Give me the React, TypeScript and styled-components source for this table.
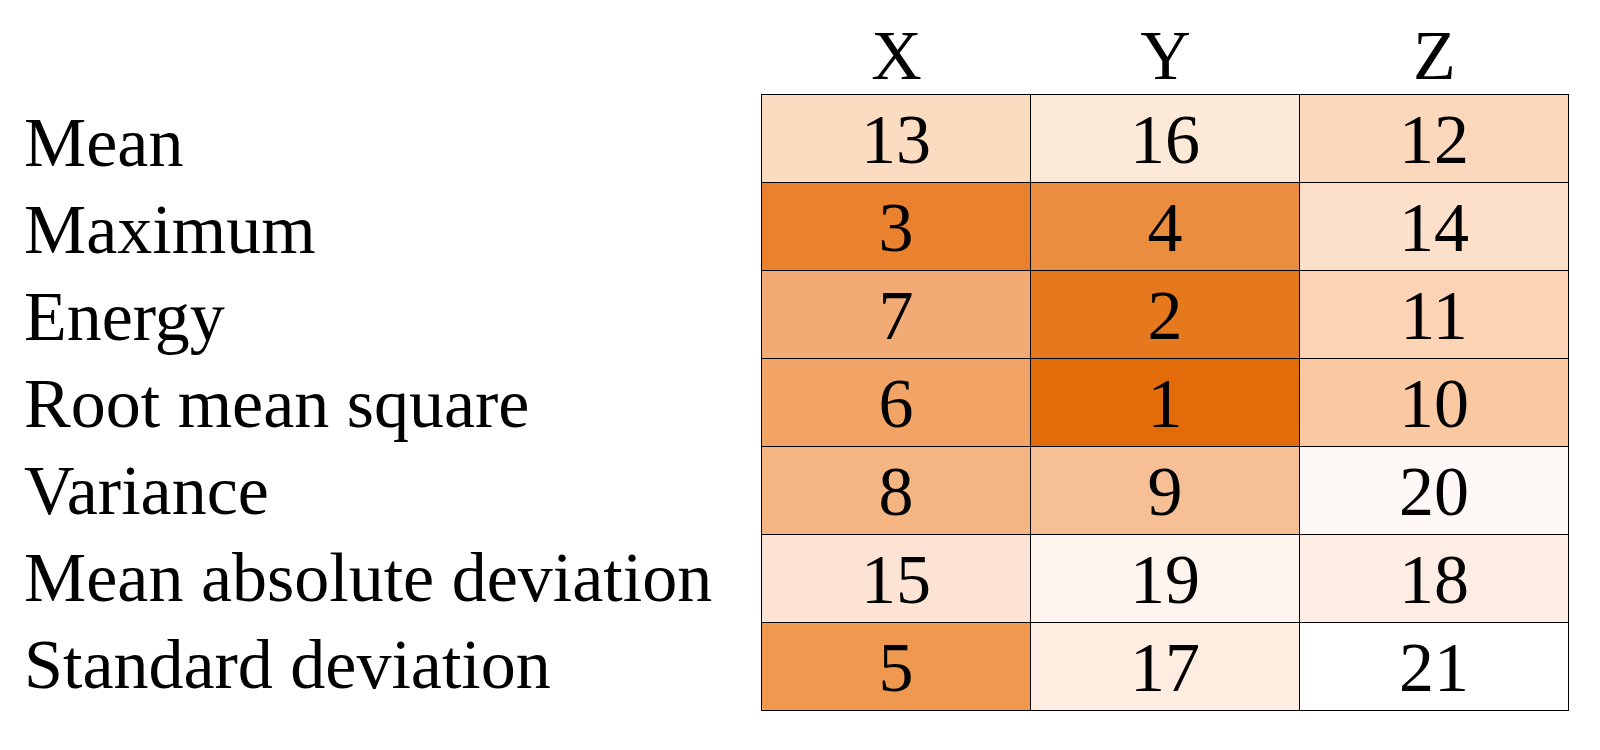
import React from 'react';
import styled, { createGlobalStyle } from 'styled-components';

const GlobalStyle = createGlobalStyle`
  html, body {
    margin: 0;
    padding: 0;
    background: #ffffff;
  }

  body {
    font-family: "Liberation Serif", "Times New Roman", serif;
    color: #000000;
  }
`;

const Page = styled.div`
  display: flex;
  width: 1600px;
  height: 750px;
  padding-left: 24px;
  box-sizing: border-box;
  font-size: 70px;
`;

const LabelColumn = styled.div`
  flex: none;
  width: 737px;
  padding-top: 99px;
  display: flex;
  flex-direction: column;
`;

const Label = styled.div`
  line-height: 87px;
  white-space: nowrap;
`;

const Table = styled.div`
  flex: none;
  width: 808px;
  display: flex;
  flex-direction: column;
`;

const HeaderRow = styled.div`
  display: grid;
  grid-template-columns: repeat(3, 1fr);
  height: 94px;
  padding-left: 1px;
  box-sizing: border-box;
`;

const HeaderCell = styled.div`
  padding-top: 17px;
  line-height: 77px;
  text-align: center;
`;

const Body = styled.div`
  display: grid;
  grid-template-columns: repeat(3, 1fr);
  border-top: 1px solid #000;
  border-left: 1px solid #000;
`;

const Cell = styled.div<{ $bg: string }>`
  height: 88px;
  box-sizing: border-box;
  border-right: 1px solid #000;
  border-bottom: 1px solid #000;
  background: ${(p) => p.$bg};
  line-height: 89px;
  text-align: center;
`;

const rows: { label: string; cells: [number, string][] }[] = [
  { label: 'Mean', cells: [[13, '#fcdcc1'], [16, '#fde9d8'], [12, '#fbd8bb']] },
  { label: 'Maximum', cells: [[3, '#e9812e'], [4, '#eb8d3f'], [14, '#fce0ca']] },
  { label: 'Energy', cells: [[7, '#f3ab75'], [2, '#e6781d'], [11, '#fcd3b4']] },
  { label: 'Root mean square', cells: [[6, '#f1a466'], [1, '#e36c0a'], [10, '#fac8a1']] },
  { label: 'Variance', cells: [[8, '#f4b583'], [9, '#f7bf95'], [20, '#fef9f6']] },
  { label: 'Mean absolute deviation', cells: [[15, '#fde3d3'], [19, '#fff4ee'], [18, '#feede2']] },
  { label: 'Standard deviation', cells: [[5, '#ee9850'], [17, '#feede0'], [21, '#ffffff']] },
];

const App: React.FC = () => {
  return (
    <>
      <GlobalStyle />
      <Page>
        <LabelColumn>
          {rows.map((r) => (
            <Label key={r.label}>{r.label}</Label>
          ))}
        </LabelColumn>
        <Table>
          <HeaderRow>
            <HeaderCell>X</HeaderCell>
            <HeaderCell>Y</HeaderCell>
            <HeaderCell>Z</HeaderCell>
          </HeaderRow>
          <Body>
            {rows.map((r) =>
              r.cells.map(([value, bg], i) => (
                <Cell key={r.label + i} $bg={bg}>
                  {value}
                </Cell>
              ))
            )}
          </Body>
        </Table>
      </Page>
    </>
  );
};

export default App;
